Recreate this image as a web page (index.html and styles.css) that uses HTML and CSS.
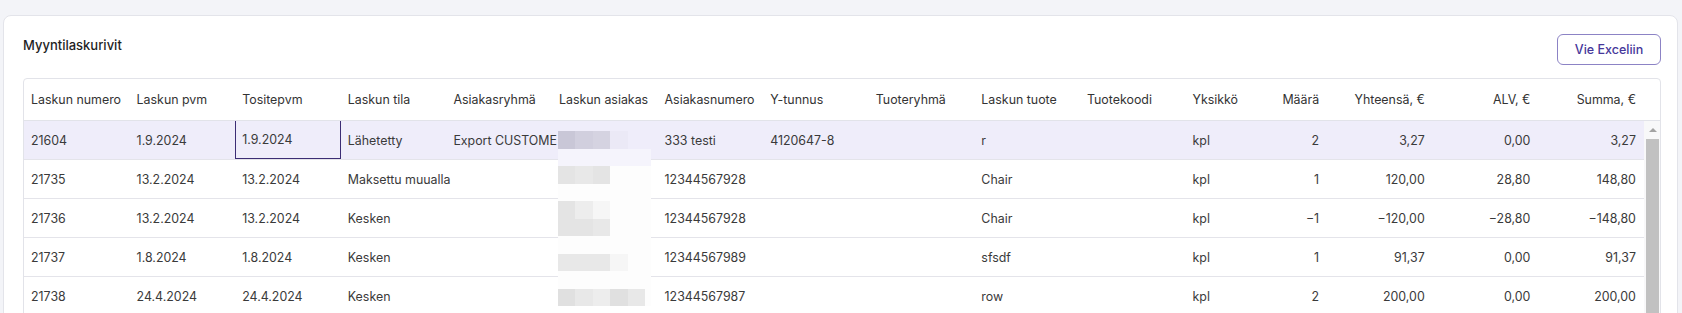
FILE: index.html
```html
<!DOCTYPE html>
<html lang="fi">
<head>
    <meta charset="UTF-8">
    <title>Myyntilaskurivit</title>
    <link rel="stylesheet" href="styles.css">
</head>
<body>
    <div class="page">
        <div class="card">
            <div class="card-header">
                <h2 class="card-title">Myyntilaskurivit</h2>
                <button class="btn-outline">Vie Exceliin</button>
            </div>

            <div class="grid">
                <div class="grid-head">
                    <div class="cell">Laskun numero</div>
                    <div class="cell">Laskun pvm</div>
                    <div class="cell">Tositepvm</div>
                    <div class="cell">Laskun tila</div>
                    <div class="cell">Asiakasryhmä</div>
                    <div class="cell">Laskun asiakas</div>
                    <div class="cell">Asiakasnumero</div>
                    <div class="cell">Y-tunnus</div>
                    <div class="cell">Tuoteryhmä</div>
                    <div class="cell">Laskun tuote</div>
                    <div class="cell">Tuotekoodi</div>
                    <div class="cell">Yksikkö</div>
                    <div class="cell num">Määrä</div>
                    <div class="cell num">Yhteensä, €</div>
                    <div class="cell num">ALV, €</div>
                    <div class="cell num">Summa, €</div>
                </div>

                <div class="grid-body">
                    <div class="grid-rows">
                        <div class="grid-row selected">
                            <div class="cell">21604</div>
                            <div class="cell">1.9.2024</div>
                            <div class="cell focused">1.9.2024</div>
                            <div class="cell">Lähetetty</div>
                            <div class="cell spill">Export CUSTOME</div>
                            <div class="cell redacted">
                                <!-- pixelated customer names -->
                                <div class="mosaic">
                                    <span class="a"></span><span class="b"></span><span class="c"></span><span class="d"></span><span class="l"></span><span class="l"></span>
                                    <span class="v"></span><span class="v"></span><span class="v"></span><span class="v"></span><span class="v"></span><span class="v"></span>
                                    <span class="g1"></span><span class="g2"></span><span class="g1"></span><span class="w"></span><span class="w"></span><span class="w"></span>
                                    <span class="w"></span><span class="w"></span><span class="w"></span><span class="w"></span><span class="w"></span><span class="w"></span>
                                    <span class="g1"></span><span class="g3"></span><span class="g4"></span><span class="w"></span><span class="w"></span><span class="w"></span>
                                    <span class="g1"></span><span class="g1"></span><span class="g2"></span><span class="w"></span><span class="w"></span><span class="w"></span>
                                    <span class="w"></span><span class="w"></span><span class="w"></span><span class="w"></span><span class="w"></span><span class="w"></span>
                                    <span class="g2"></span><span class="g2"></span><span class="g2"></span><span class="g4"></span><span class="w"></span><span class="w"></span>
                                    <span class="w"></span><span class="w"></span><span class="w"></span><span class="w"></span><span class="w"></span><span class="w"></span>
                                    <span class="g0"></span><span class="g2"></span><span class="g3"></span><span class="g0"></span><span class="g2"></span><span class="w"></span>
                                </div>
                            </div>
                            <div class="cell">333 testi</div>
                            <div class="cell">4120647-8</div>
                            <div class="cell"></div>
                            <div class="cell">r</div>
                            <div class="cell"></div>
                            <div class="cell">kpl</div>
                            <div class="cell num">2</div>
                            <div class="cell num">3,27</div>
                            <div class="cell num">0,00</div>
                            <div class="cell num">3,27</div>
                        </div>
                        <div class="grid-row">
                            <div class="cell">21735</div>
                            <div class="cell">13.2.2024</div>
                            <div class="cell">13.2.2024</div>
                            <div class="cell spill">Maksettu muualla</div>
                            <div class="cell"></div>
                            <div class="cell"></div>
                            <div class="cell">12344567928</div>
                            <div class="cell"></div>
                            <div class="cell"></div>
                            <div class="cell">Chair</div>
                            <div class="cell"></div>
                            <div class="cell">kpl</div>
                            <div class="cell num">1</div>
                            <div class="cell num">120,00</div>
                            <div class="cell num">28,80</div>
                            <div class="cell num">148,80</div>
                        </div>
                        <div class="grid-row">
                            <div class="cell">21736</div>
                            <div class="cell">13.2.2024</div>
                            <div class="cell">13.2.2024</div>
                            <div class="cell">Kesken</div>
                            <div class="cell"></div>
                            <div class="cell"></div>
                            <div class="cell">12344567928</div>
                            <div class="cell"></div>
                            <div class="cell"></div>
                            <div class="cell">Chair</div>
                            <div class="cell"></div>
                            <div class="cell">kpl</div>
                            <div class="cell num">−1</div>
                            <div class="cell num">−120,00</div>
                            <div class="cell num">−28,80</div>
                            <div class="cell num">−148,80</div>
                        </div>
                        <div class="grid-row">
                            <div class="cell">21737</div>
                            <div class="cell">1.8.2024</div>
                            <div class="cell">1.8.2024</div>
                            <div class="cell">Kesken</div>
                            <div class="cell"></div>
                            <div class="cell"></div>
                            <div class="cell">12344567989</div>
                            <div class="cell"></div>
                            <div class="cell"></div>
                            <div class="cell">sfsdf</div>
                            <div class="cell"></div>
                            <div class="cell">kpl</div>
                            <div class="cell num">1</div>
                            <div class="cell num">91,37</div>
                            <div class="cell num">0,00</div>
                            <div class="cell num">91,37</div>
                        </div>
                        <div class="grid-row">
                            <div class="cell">21738</div>
                            <div class="cell">24.4.2024</div>
                            <div class="cell">24.4.2024</div>
                            <div class="cell">Kesken</div>
                            <div class="cell"></div>
                            <div class="cell"></div>
                            <div class="cell">12344567987</div>
                            <div class="cell"></div>
                            <div class="cell"></div>
                            <div class="cell">row</div>
                            <div class="cell"></div>
                            <div class="cell">kpl</div>
                            <div class="cell num">2</div>
                            <div class="cell num">200,00</div>
                            <div class="cell num">0,00</div>
                            <div class="cell num">200,00</div>
                        </div>
                    </div>

                    <div class="scrollbar">
                        <div class="scroll-up"></div>
                        <div class="scroll-thumb"></div>
                    </div>
                </div>
            </div>
        </div>
    </div>
</body>
</html>
```

FILE: styles.css
```css
* {
    box-sizing: border-box;
}

html,
body {
    height: 100%;
    overflow: hidden;
}

body {
    margin: 0;
    background-color: #f3f4f8;
    font-family: 'Inter', 'Noto Sans', sans-serif;
    font-size: 12.4px;
    color: #3a3a3a;
}

.page {
    padding: 15px 4px 0 3px;
}

/* Card */
.card {
    background-color: #fff;
    border: 1px solid #e3e4ea;
    border-radius: 8px;
    padding: 18px 16px 20px 19px;
}

.card-header {
    display: flex;
    justify-content: space-between;
    align-items: flex-start;
    height: 31px;
    margin-bottom: 13px;
}

.card-title {
    margin: 0;
    padding-top: 1px;
    font-size: 13px;
    font-weight: 500;
    line-height: 20px;
    color: #1f1f1f;
}

.btn-outline {
    width: 104px;
    height: 31px;
    padding: 0;
    border: 1px solid #8c83c5;
    border-radius: 6px;
    background-color: #fff;
    color: #46379a;
    font-family: 'Inter', sans-serif;
    font-size: 12.5px;
    font-weight: 500;
    cursor: pointer;
}

/* Grid */
.grid {
    border: 1px solid #e2e3e9;
    border-radius: 4px;
}

.grid-head,
.grid-row {
    display: grid;
    grid-template-columns: repeat(11, 105.6px) 70.8px 70.8px repeat(3, 105.6px);
    align-items: center;
}

.grid-head {
    height: 42px;
    border-bottom: 1px solid #e2e3e9;
    color: #333;
}

.grid-body {
    display: flex;
}

.grid-rows {
    flex: 1;
}

.grid-row {
    height: 39px;
    border-bottom: 1px solid #e4e4ea;
}

.grid-row.selected {
    background-color: #efedfa;
}

.cell {
    height: 100%;
    display: flex;
    align-items: center;
    padding: 0 8px 0 7px;
    white-space: nowrap;
    overflow: hidden;
}

/* long text runs into the empty neighbour cell */
.cell.spill {
    overflow: visible;
}

.cell.num {
    justify-content: flex-end;
}

.cell.focused {
    border-left: 1px solid #3c2d74;
    border-right: 1px solid #3c2d74;
    border-bottom: 1px solid #3c2d74;
    padding-left: 6px;
}

/* Redacted customer names */
.cell.redacted {
    position: relative;
    overflow: visible;
}

.mosaic {
    position: absolute;
    top: 10px;
    left: 6px;
    z-index: 1;
    display: grid;
    grid-template-columns: repeat(5, 17.4px) 6px;
    grid-auto-rows: 17.5px;
}

.mosaic .a { background-color: #c9c7d7; }
.mosaic .b { background-color: #d1cfde; }
.mosaic .c { background-color: #d5d3e1; }
.mosaic .d { background-color: #ebe9f6; }
.mosaic .l { background-color: #efedfa; }
.mosaic .v { background-color: #f5f4fc; }
.mosaic .g0 { background-color: #e0e0e0; }
.mosaic .g1 { background-color: #e4e4e4; }
.mosaic .g2 { background-color: #e8e8e8; }
.mosaic .g3 { background-color: #ededed; }
.mosaic .g4 { background-color: #f6f6f6; }
.mosaic .w { background-color: #fdfdfd; }

/* Scrollbar */
.scrollbar {
    width: 16px;
    display: flex;
    flex-direction: column;
    background-color: #f8f8f9;
}

.scroll-up {
    height: 18px;
    display: flex;
    align-items: center;
    justify-content: center;
}

.scroll-up::before {
    content: "";
    border-left: 4px solid transparent;
    border-right: 4px solid transparent;
    border-bottom: 4px solid #a3a3a3;
    margin-left: 1px;
}

.scroll-thumb {
    flex: 1;
    margin: 0 1px 0 2px;
    background-color: #c1c1c1;
}
```
